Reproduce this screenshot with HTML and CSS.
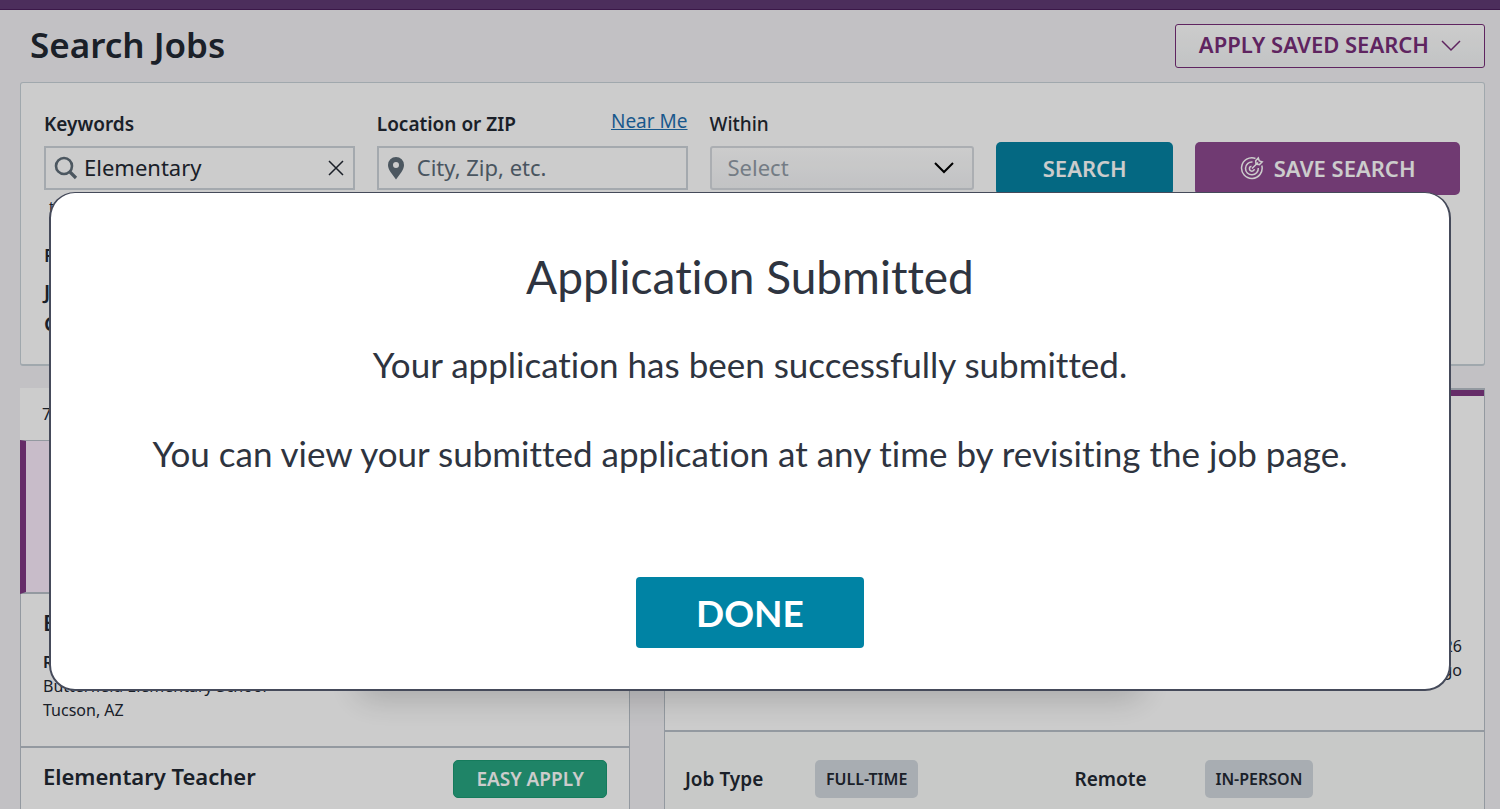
FILE: index.html
```html
<!DOCTYPE html>
<html lang="en">
<head>
  <meta charset="UTF-8">
  <title>Search Jobs</title>
  <meta name="viewport" content="width=device-width, initial-scale=1.0">
  <link rel="stylesheet" href="styles.css">
</head>
<body>
  <div class="topbar"></div>

  <main class="page">
    <header class="page-header">
      <h1>Search Jobs</h1>
      <button class="saved-btn" type="button">
        APPLY SAVED SEARCH
        <svg width="20" height="16" viewBox="0 0 20 16" aria-hidden="true"><path d="M1 5l9 9 9-9" fill="none" stroke="currentColor" stroke-width="1.5"/></svg>
      </button>
    </header>

    <section class="search-panel">
      <form class="search-form">
        <div class="field">
          <div class="field-head"><label for="keywords">Keywords</label></div>
          <div class="control">
            <div class="input-box">
              <svg class="icon-search" width="24" height="24" viewBox="0 0 24 24" aria-hidden="true"><circle cx="10" cy="10" r="8" fill="none" stroke="currentColor" stroke-width="2.6"/><path d="M15.5 15.5l6.5 6.5" stroke="currentColor" stroke-width="3.2"/></svg>
              <input id="keywords" type="text" value="Elementary">
              <button class="clear-btn" type="button" aria-label="Clear keywords">
                <svg width="16" height="16" viewBox="0 0 16 16" aria-hidden="true"><path d="M1 1l14 14M15 1L1 15" stroke="currentColor" stroke-width="1.5"/></svg>
              </button>
            </div>
          </div>
        </div>

        <div class="field">
          <div class="field-head">
            <label for="location">Location or ZIP</label>
            <a class="near-me" href="#">Near Me</a>
          </div>
          <div class="control">
            <div class="input-box location-box">
              <svg class="icon-pin" width="18" height="24" viewBox="0 0 18 24" aria-hidden="true"><path fill="currentColor" fill-rule="evenodd" d="M9 1a8 8 0 0 0-8 8c0 2.600 1 4.600 2.500 7L9 23.500 14.500 16C16 13.600 17 11.600 17 9a8 8 0 0 0-8-8zm0 5a3 3 0 1 1 0 6 3 3 0 0 1 0-6z"/></svg>
              <input id="location" type="text" placeholder="City, Zip, etc.">
            </div>
          </div>
        </div>

        <div class="field">
          <div class="field-head"><label class="label-light" for="within">Within</label></div>
          <div class="control">
            <div class="select-box">
              <select id="within"><option>Select</option></select>
              <svg class="select-arrow" width="20" height="12" viewBox="0 0 20 12" aria-hidden="true"><path d="M1 1l9 9 9-9" fill="none" stroke="currentColor" stroke-width="2"/></svg>
            </div>
          </div>
        </div>

        <button class="btn btn-search" type="button">SEARCH</button>
        <button class="btn btn-save" type="button">
          <svg width="24" height="24" viewBox="0 0 24 24" fill="none" stroke="currentColor" stroke-width="1.5" aria-hidden="true">
            <path d="M15.500 2.500A10.300 10.300 0 1 0 21.800 9.500"/>
            <path d="M12.500 6.100A6.400 6.400 0 1 0 18.300 12"/>
            <path d="M11.500 10.200a2.500 2.500 0 1 0 2.900 2.900"/>
            <path d="M12 12.500l6-6M16 8.200l-.3-3.400L18.300 2l1 2.900 2.900 1L19.400 8.600z"/>
          </svg>
          SAVE SEARCH
        </button>
      </form>

      <p class="hint">try a job title or skill</p>

      <div class="filters">
        <p class="filter-title">Filters</p>
        <p class="filter-name">Job Category</p>
        <p class="filter-name">Certification</p>
      </div>
    </section>

    <div class="columns">
      <section class="results">
        <p class="results-count">74 jobs</p>
        <article class="job job-selected"></article>
        <article class="job">
          <div class="job-head"><h2>Elementary Teacher</h2></div>
          <p class="job-ref">Requisition</p>
          <p>Butterfield Elementary School</p>
          <p>Tucson, AZ</p>
        </article>
        <article class="job">
          <div class="job-head">
            <h2>Elementary Teacher</h2>
            <button class="easy-btn" type="button">EASY APPLY</button>
          </div>
        </article>
      </section>

      <section class="detail">
        <div class="detail-top">
          <p>1/12/2026</p>
          <p>3 days ago</p>
        </div>
        <dl class="detail-facts">
          <div class="fact"><dt>Job Type</dt><dd>FULL-TIME</dd></div>
          <div class="fact"><dt>Remote</dt><dd>IN-PERSON</dd></div>
        </dl>
      </section>
    </div>
  </main>

  <div class="modal-overlay">
    <div class="modal" role="dialog" aria-modal="true" aria-labelledby="modal-title">
      <h2 id="modal-title">Application Submitted</h2>
      <p>Your application has been successfully submitted.</p>
      <p>You can view your submitted application at any time by revisiting the job page.</p>
      <button class="done-btn" type="button">DONE</button>
    </div>
  </div>
</body>
</html>
```
FILE: styles.css
```css
* {
  box-sizing: border-box;
}

body {
  margin: 0;
  height: 100vh;
  overflow: hidden; /* no scrolling behind the modal */
  font-family: "Noto Sans", sans-serif;
  font-size: 16px;
  line-height: 24px;
  background: #f3f2f5;
  color: #222833;
}

h1, h2, p, dl, dd {
  margin: 0;
}

button, input, select {
  font-family: inherit;
  color: inherit;
}

button {
  cursor: pointer;
}

.topbar {
  height: 10px;
  background: #603a74;
  border-bottom: 1px solid #4a1f5c;
}

.page {
  padding: 0 15px 0 20px;
}

/* === Header === */
.page-header {
  display: flex;
  justify-content: space-between;
  align-items: center;
  height: 72px;
  padding-left: 10px;
}

h1 {
  padding-bottom: 3px;
  font-size: 35px;
  line-height: 48px;
  font-weight: 600;
}

.saved-btn {
  display: flex;
  align-items: center;
  gap: 12px;
  height: 44px;
  padding: 0 23px 4px;
  border: 1px solid #772e78;
  border-radius: 3px;
  background: linear-gradient(#ffffff, #f3f5f6);
  color: #772e78;
  font-size: 22px;
  font-weight: 600;
}

/* === Search panel === */
.search-panel {
  height: 284px;
  padding: 24px 24px 24px 23px;
  background: #fff;
  border: 1px solid #c8d2d9;
  border-bottom-width: 2px;
  border-radius: 3px;
}

.search-form {
  display: grid;
  grid-template-columns: minmax(0, 311fr) minmax(0, 311fr) minmax(0, 265fr) minmax(0, 177fr) minmax(0, 265fr);
  gap: 22px;
  align-items: end;
}

.field-head {
  display: flex;
  justify-content: space-between;
  height: 35px;
  padding-top: 5px;
  font-size: 19px;
}

.field-head label {
  font-weight: 600;
}

.field-head .label-light {
  font-weight: 500;
}

.near-me {
  margin-top: -3px;
  color: #1f6fb0;
}

.control {
  height: 53px;
  padding-top: 4px;
}

.input-box,
.select-box {
  position: relative;
  display: flex;
  align-items: center;
  width: 100%;
  height: 44px;
  border: 2px solid #ced4da;
  background: #fff;
}

.input-box {
  gap: 6px;
  padding: 0 8px;
}

.input-box input {
  flex: 1;
  min-width: 0;
  padding: 0 0 2px;
  border: 0;
  outline: 0;
  background: none;
  font-size: 22px;
}

.input-box input::placeholder {
  color: #5c6b78;
  opacity: 1;
}

.location-box {
  gap: 12px;
}

.icon-search,
.icon-pin {
  flex: none;
  color: #5f6d78;
}

.clear-btn {
  display: flex;
  padding: 1px;
  border: 0;
  background: none;
}

.select-box {
  border-color: #d6dadf;
  border-radius: 3px;
  background: linear-gradient(#ffffff, #f3f4f6);
}

.select-box select {
  width: 100%;
  height: 100%;
  padding: 0 16px 2px;
  border: 0;
  background: none;
  appearance: none;
  color: #929ca7;
  font-size: 22px;
}

.select-arrow {
  position: absolute;
  right: 18px;
  color: #000;
  pointer-events: none;
}

.btn {
  display: flex;
  justify-content: center;
  align-items: center;
  gap: 10px;
  height: 53px;
  padding: 0 0 2px;
  border: 0;
  border-radius: 5px;
  color: #fff;
  font-size: 22px;
  font-weight: 600;
}

.btn-search {
  background: #0683a3;
}

.btn-save {
  background: #8d498f;
}

.hint {
  padding-left: 5px;
  font-size: 14px;
}

.filters {
  padding-top: 24px;
}

.filter-title {
  margin-bottom: 9px;
  font-size: 18px;
  font-weight: 600;
}

.filter-name {
  font-size: 20px;
  line-height: 32px;
  font-weight: 600;
}

/* === Results and detail === */
.columns {
  display: grid;
  grid-template-columns: 610fr 821fr;
  gap: 34px;
  padding-top: 22px;
}

.results-count {
  height: 52px;
  padding: 14px 22px;
  background: #fff;
}

.job {
  height: 154px;
  padding: 12px 22px;
  background: #fff;
  border: 1px solid #b8c0c8;
  border-top-width: 0;
  border-bottom: 2px solid #b8c0c8;
}

.job-selected {
  border-top-width: 1px;
  border-left: 6px solid #7f3783;
  background: #fbebfc;
}

.job-head {
  display: flex;
  justify-content: space-between;
  align-items: flex-start;
  height: 38px;
}

.job h2 {
  font-size: 22px;
  line-height: 32px;
  font-weight: 600;
}

.job-ref {
  padding-top: 6px;
  height: 30px;
  font-weight: 600;
}

.easy-btn {
  height: 38px;
  padding: 0 22px;
  border: 1px solid #1b9a73;
  border-radius: 5px;
  background: #27a581;
  color: #fff;
  font-size: 19px;
  font-weight: 600;
}

.detail {
  border: 1px solid #b8c0c8;
  border-top-width: 2px;
  background: #fafcfb;
}

.detail-top {
  display: flex;
  flex-direction: column;
  justify-content: flex-end;
  height: 342px;
  padding: 0 22px 48px;
  background: #fff;
  border-top: 6px solid #7f3783;
  border-bottom: 2px solid #b8c0c8;
  text-align: right;
}

.detail-facts {
  display: grid;
  grid-template-columns: 1fr 1fr;
  padding: 28px 20px;
}

.fact {
  display: grid;
  grid-template-columns: 130px auto;
  justify-content: start;
  align-items: center;
}

.fact dt {
  font-size: 19px;
  font-weight: 600;
}

.fact dd {
  padding: 7px 11px;
  border-radius: 5px;
  background: #d3d9df;
  font-weight: 600;
}

/* === Modal === */
.modal-overlay {
  position: fixed;
  inset: 0;
  z-index: 10;
  padding: 192px 49px 0;
  background: rgba(0, 0, 0, 0.2);
}

.modal {
  position: relative;
  display: flex;
  flex-direction: column;
  align-items: center;
  padding: 56px 40px 41px;
  border: 2px solid #454a5a;
  border-top-width: 1px;
  border-radius: 26px;
  background: #fff;
  color: #2e3440;
  font-family: Lato, sans-serif;
  font-variant-ligatures: none;
  text-align: center;
}

/* shadow only under the middle of the dialog */
.modal::after {
  content: "";
  position: absolute;
  z-index: -1;
  left: 22%;
  right: 22%;
  bottom: 10px;
  height: 120px;
  box-shadow: 0 18px 32px rgba(0, 0, 0, 0.2);
}

.modal h2 {
  margin-bottom: 37px;
  font-size: 46px;
  line-height: 56px;
  font-weight: 400;
}

.modal p {
  margin-bottom: 45px;
  font-size: 35px;
  line-height: 44px;
}

.done-btn {
  width: 228px;
  height: 71px;
  margin-top: 57px;
  border: 0;
  border-radius: 4px;
  background: #0083a4;
  color: #fff;
  font-size: 37px;
  font-weight: 700;
}
```
